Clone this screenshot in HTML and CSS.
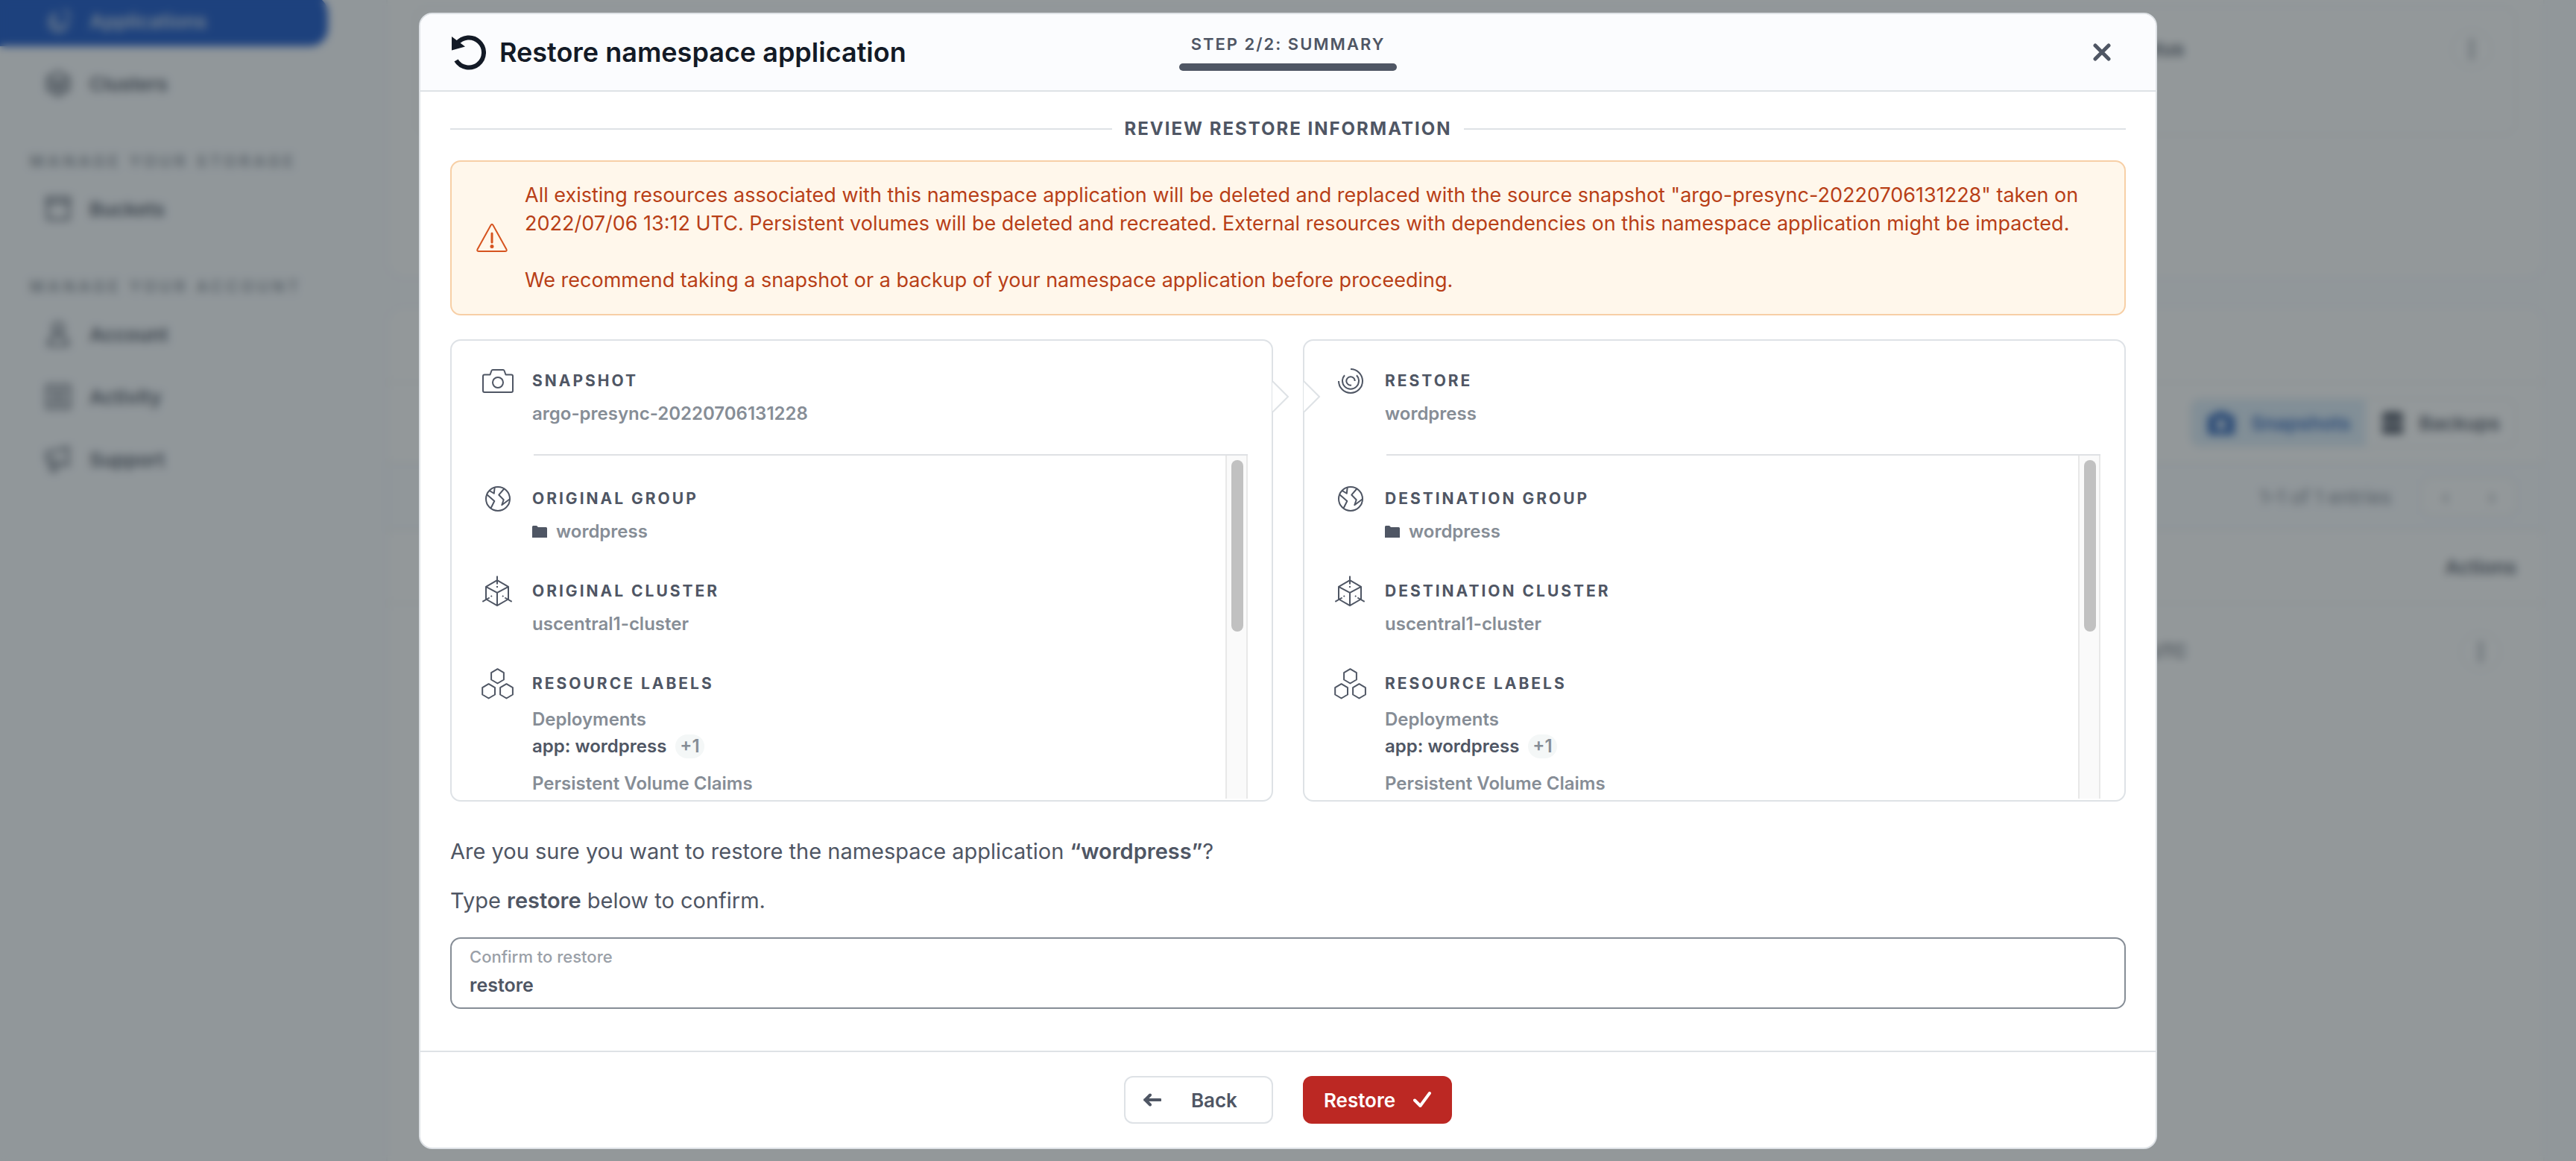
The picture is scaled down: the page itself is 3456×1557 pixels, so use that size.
FILE: index.html
```html
<!DOCTYPE html>
<html lang="en">
<head>
<meta charset="utf-8">
<title>Restore namespace application</title>
<link rel="stylesheet" href="styles.css">
</head>
<body>
<svg class="sprite" aria-hidden="true">
  <symbol id="i-camera" viewBox="0 0 44 44"><path d="M4 13.500h7.500l2-5.500q.400-1 1.500-1h14q1.100 0 1.500 1l2 5.500H40q2 0 2 2V35q0 2-2 2H4q-2 0-2-2V15.500q0-2 2-2z"/><circle cx="22" cy="24" r="7"/></symbol>
  <symbol id="i-globe" viewBox="0 0 44 44"><circle cx="22" cy="22" r="16"/><path d="M10.500 11l6.300 3.700.900-8.300M6.700 15.700l10.600 9.300-5 10M30.700 8l-7.400 8.700 6.400 6.600-2.400 7 10.700-8"/></symbol>
  <symbol id="i-cube" viewBox="0 0 44 44"><path d="M21 7.200l15 8.600v16.700l-15 8.700-15-8.700V15.800zM6 15.800l15 8 15-8M21 23.800v17.400M21 1.500v11M21 15v2M1.300 35.800l9.400-5.300M40.700 35.800l-9.400-5.300M12.500 29l1.600-.900M29.500 29l-1.600-.900"/></symbol>
  <symbol id="i-hex" viewBox="0 0 44 44"><path d="M21.500 2.200l8.400 5v9.300l-8.400 5-8.400-5V7.200zM9.600 22.200l8.400 5v9.300l-8.400 5-8.400-5v-9.300zM33.500 22.200l8.400 5v9.300l-8.400 5-8.400-5v-9.300z"/></symbol>
  <symbol id="i-spiral" viewBox="0 0 44 44"><path d="M22 6A16 16 0 1 1 6 22M30 14.200A11 11 0 1 1 14 14.200M23 27.600A5.700 5.700 0 1 1 27.700 22"/></symbol>
  <symbol id="i-folder" viewBox="0 0 20 16"><path d="M0 1.500Q0 0 1.500 0H6l2 2h10.500Q20 2 20 3.500V16H0z"/></symbol>
  <symbol id="i-dots" viewBox="0 0 36 36"><circle cx="18" cy="8" r="3"/><circle cx="18" cy="18" r="3"/><circle cx="18" cy="28" r="3"/></symbol>
  <symbol id="i-notch" viewBox="0 0 24 42"><path d="M1 0L22 21 1 42"/></symbol>
</svg>

<div class="app">
  <nav class="sidebar">
    <a class="nav-item active" href="#"><svg viewBox="0 0 36 36"><path d="M16 8A12 12 0 1 0 30 16M17 14a6 6 0 1 0 7 7M26 3a14 14 0 0 1 7 11"/></svg>Applications</a>
    <a class="nav-item" href="#"><svg viewBox="0 0 36 36"><path d="M18 2l14 8v16l-14 8-14-8V10zM4 10l14 8 14-8M18 18v16M4 26l14-8 14 8"/></svg>Clusters</a>
    <h2 class="nav-heading">MANAGE YOUR STORAGE</h2>
    <a class="nav-item" href="#"><svg viewBox="0 0 36 36"><path d="M3 3h30v7H3zM4 10v22h28V10"/></svg>Buckets</a>
    <h2 class="nav-heading">MANAGE YOUR ACCOUNT</h2>
    <a class="nav-item" href="#"><svg viewBox="0 0 36 36"><circle cx="18" cy="10" r="7"/><path d="M5 33q1-14 13-14t13 14z"/></svg>Account</a>
    <a class="nav-item" href="#"><svg viewBox="0 0 36 36"><path d="M3 3h30v30H3zM9 11h18M9 18h18M9 25h18"/></svg>Activity</a>
    <a class="nav-item" href="#"><svg viewBox="0 0 36 36"><path d="M3 8h8l20-6v24l-20-6H3zM8 20v13h8V21"/></svg>Support</a>
  </nav>
  <div class="main">
    <section class="panel overview">
      <div class="summary-card"><span class="status">Status</span><button class="round" aria-label="More"><svg><use href="#i-dots"/></svg></button></div>
    </section>
    <section class="panel listing">
      <div class="band title-band"></div>
      <div class="band tools">
        <div class="segment">
          <button class="seg on"><svg class="wide" viewBox="0 0 40 32"><path fill-rule="evenodd" d="M2 6h8l3-5h14l3 5h8v26H2zM20 11a7 7 0 1 0 0 14 7 7 0 0 0 0-14z"/></svg>Snapshots</button>
          <button class="seg"><svg viewBox="0 0 32 32"><path d="M2 4l5-3h18l5 3v11H2zM2 18h28v13H2z"/></svg>Backups</button>
        </div>
      </div>
      <div class="band pages"><span>1–1 of 1 entries</span>
        <div class="pager"><button aria-label="Previous">‹</button><button aria-label="Next">›</button></div>
      </div>
      <div class="band columns">Actions</div>
      <div class="row"><span class="created">UTC</span><button class="round" aria-label="More"><svg><use href="#i-dots"/></svg></button></div>
    </section>
  </div>
</div>

<div class="overlay">
  <div class="modal" role="dialog" aria-modal="true" aria-labelledby="modal-title">
    <header class="modal-head">
      <div class="modal-name">
        <svg class="restore-icon" viewBox="0 0 48 48"><path class="ring" d="M9 12.500A20 20 0 1 1 8 35"/><path d="M2 3l18 13.500-18 5z"/></svg>
        <h1 id="modal-title">Restore namespace application</h1>
      </div>
      <div class="step"><span>STEP 2/2: SUMMARY</span><i></i></div>
      <button class="close" aria-label="Close"><svg viewBox="0 0 24 24"><path d="M3 3l18 18M21 3L3 21"/></svg></button>
    </header>

    <div class="modal-body">
      <h2 class="rule-heading">REVIEW RESTORE INFORMATION</h2>

      <div class="alert" role="alert">
        <svg viewBox="0 0 44 40"><path d="M20.500 3q1.500-2.500 3 0l18 32.500q1 2.500-2 2.500h-35q-3 0-2-2.500z"/><path class="mark" d="M22 14v12"/><circle cx="22" cy="31.500" r="1.500"/></svg>
        <div>
          <p>All existing resources associated with this namespace application will be deleted and replaced with the source snapshot "argo-presync-20220706131228" taken on 2022/07/06 13:12 UTC. Persistent volumes will be deleted and recreated. External resources with dependencies on this namespace application might be impacted.</p>
          <p>We recommend taking a snapshot or a backup of your namespace application before proceeding.</p>
        </div>
      </div>

      <div class="cards">
        <section class="card from">
          <svg class="notch"><use href="#i-notch"/></svg>
          <div class="item"><svg class="icon"><use href="#i-camera"/></svg><div><h3>SNAPSHOT</h3><p>argo-presync-20220706131228</p></div></div>
          <hr>
          <div class="scroll">
            <div class="items">
              <div class="item"><svg class="icon"><use href="#i-globe"/></svg><div><h3>ORIGINAL GROUP</h3><p class="folder"><svg><use href="#i-folder"/></svg>wordpress</p></div></div>
              <div class="item"><svg class="icon"><use href="#i-cube"/></svg><div><h3>ORIGINAL CLUSTER</h3><p>uscentral1-cluster</p></div></div>
              <div class="item"><svg class="icon"><use href="#i-hex"/></svg><div><h3>RESOURCE LABELS</h3>
                <dl><dt>Deployments</dt><dd>app: wordpress <span class="pill">+1</span></dd><dt>Persistent Volume Claims</dt></dl></div></div>
            </div>
            <div class="track"><div class="thumb"></div></div>
          </div>
        </section>

        <section class="card to">
          <svg class="notch"><use href="#i-notch"/></svg>
          <div class="item"><svg class="icon"><use href="#i-spiral"/></svg><div><h3>RESTORE</h3><p>wordpress</p></div></div>
          <hr>
          <div class="scroll">
            <div class="items">
              <div class="item"><svg class="icon"><use href="#i-globe"/></svg><div><h3>DESTINATION GROUP</h3><p class="folder"><svg><use href="#i-folder"/></svg>wordpress</p></div></div>
              <div class="item"><svg class="icon"><use href="#i-cube"/></svg><div><h3>DESTINATION CLUSTER</h3><p>uscentral1-cluster</p></div></div>
              <div class="item"><svg class="icon"><use href="#i-hex"/></svg><div><h3>RESOURCE LABELS</h3>
                <dl><dt>Deployments</dt><dd>app: wordpress <span class="pill">+1</span></dd><dt>Persistent Volume Claims</dt></dl></div></div>
            </div>
            <div class="track"><div class="thumb"></div></div>
          </div>
        </section>
      </div>

      <div class="ask">
        <p>Are you sure you want to restore the namespace application <b>“wordpress”</b>?</p>
        <p>Type <b>restore</b> below to confirm.</p>
      </div>
      <div class="field">
        <label for="confirm">Confirm to restore</label>
        <input id="confirm" type="text" value="restore">
      </div>
    </div>

    <footer class="modal-foot">
      <button class="btn back"><svg viewBox="0 0 24 24"><path d="M22.500 12H2M9 5.500L2.500 12 9 18.500"/></svg>Back</button>
      <button class="btn go">Restore<svg viewBox="0 0 24 24"><path d="M2 12.500l7.500 7.500L22 3"/></svg></button>
    </footer>
  </div>
</div>
</body>
</html>
```
FILE: styles.css
```css
* { box-sizing: border-box; }

body {
  margin: 0;
  font-family: Inter, "Liberation Sans", sans-serif;
  color: #4f5664;
  background: #fafcff;
}

h1, h2, h3, p, dl, dd { margin: 0; }
button, input { font: inherit; color: inherit; }
button { cursor: pointer; }
svg { flex: none; }
.sprite { position: absolute; width: 0; height: 0; }

/* Page behind the dialog */
.app { display: flex; height: 100vh; overflow: hidden; }
.sidebar { width: 440px; margin-top: -6px; flex: none; }
.nav-item {
  display: flex; align-items: center; gap: 24px;
  height: 68px; margin-bottom: 16px; padding-left: 60px;
  border-radius: 0 24px 24px 0;
  font-size: 26px; font-weight: 600; color: #4f5664; text-decoration: none;
}
.nav-item svg { width: 36px; height: 36px; fill: none; stroke: currentColor; stroke-width: 3; }
.nav-item.active { background: #1351c5; color: #c5d5ea; }
.nav-heading {
  margin: 56px 0 14px; padding-left: 40px;
  font-size: 21px; line-height: 30px; font-weight: 600; letter-spacing: 5px; color: #868d96;
}
.main { flex: 1; padding: 0 42px 0 78px; }
.panel { background: #fff; border: 2px solid #f0f2f5; }
.overview { height: 374px; padding: 8px 36px; border-top: 0; border-radius: 0 0 24px 24px; }
.summary-card {
  display: flex; justify-content: space-between; height: 174px; padding: 28px 30px;
  border: 2px solid #eceff2; border-radius: 16px; font-size: 26px; font-weight: 600;
}
.status, .created { width: 85%; text-align: right; line-height: 56px; }
.listing { height: 1300px; margin-top: 36px; border-radius: 24px 24px 0 0; }
.band { display: flex; align-items: center; justify-content: flex-end; padding-right: 36px; border-bottom: 2px solid #eceff2; }
.title-band { height: 102px; }
.tools { height: 108px; }
.segment { display: flex; border: 2px solid #eceff2; border-radius: 12px; }
.seg {
  display: flex; align-items: center; gap: 20px; height: 62px; padding: 0 20px;
  border: 0; background: none; font-size: 26px; font-weight: 600;
}
.seg svg { width: 32px; height: 32px; fill: currentColor; }
.seg .wide { width: 40px; }
.seg.on { background: #dcecf8; color: #2c62b8; border-radius: 12px 0 0 12px; }
.pages { height: 90px; gap: 40px; background: #fafcff; font-size: 26px; color: #7c8490; }
.pager { display: flex; border: 2px solid #eceff2; border-radius: 12px; background: #fff; }
.pager button { width: 62px; height: 48px; border: 0; background: none; }
.columns { height: 98px; font-size: 26px; font-weight: 600; }
.row { display: flex; justify-content: space-between; padding: 36px 56px 36px 20px; font-size: 24px; font-weight: 500; }
.round { width: 56px; height: 56px; padding: 8px; border: 2px solid #eceff2; border-radius: 50%; background: #fff; }
.round svg { width: 36px; height: 36px; fill: #6c7480; }

/* Dialog */
.overlay {
  position: fixed; inset: 0;
  display: flex; flex-direction: column; align-items: center; padding-top: 17px;
  background: rgba(39, 49, 53, .5);
  backdrop-filter: blur(6px);
}
.modal {
  width: 67.5%; max-width: 2332px;
  overflow: hidden;
  background: #fff; border: 2px solid #dee2e6; border-radius: 18px;
}
.modal-head {
  display: grid; grid-template-columns: 1fr auto 1fr; align-items: center;
  height: 104px; padding: 0 40px;
  background: #fbfcfe; border-bottom: 2px solid #dee2e6;
}
.modal-name { display: flex; align-items: center; gap: 18px; }
.restore-icon { width: 48px; height: 48px; fill: #131a26; }
.restore-icon .ring { fill: none; stroke: #131a26; stroke-width: 6; }
h1 { font-size: 36px; line-height: 44px; font-weight: 600; color: #131a26; }
.step { display: flex; flex-direction: column; align-items: center; gap: 12px; }
.step span { padding: 0 12px; font-size: 22px; line-height: 28px; font-weight: 600; letter-spacing: 2px; }
.step i { width: 292px; height: 10px; border-radius: 5px; background: #4f5664; }
.close { justify-self: end; display: flex; padding: 20px; border: 0; background: none; }
.close svg { width: 24px; height: 24px; fill: none; stroke: #4f5664; stroke-width: 5; stroke-linecap: round; }

.modal-body { padding: 36px 40px 56px; }
.rule-heading {
  display: flex; align-items: center; gap: 16px; margin-bottom: 28px;
  font-size: 24px; line-height: 28px; font-weight: 700; letter-spacing: 2px;
}
.rule-heading::before, .rule-heading::after { content: ""; flex: 1; height: 2px; background: #dee2e6; }

.alert {
  display: flex; align-items: center; gap: 22px; padding: 26px 32px;
  border: 2px solid #f7cfa6; border-radius: 14px;
  background: #fff7eb; color: #b83f17; font-size: 27px; line-height: 38px;
}
.alert svg { width: 44px; height: 40px; fill: none; stroke: #d65420; stroke-width: 2; stroke-linecap: round; }
.alert .mark { stroke-width: 3; }
.alert circle { fill: #d65420; }
.alert p + p { margin-top: 38px; }

.cards { display: grid; grid-template-columns: 1fr 1fr; gap: 40px; margin-top: 32px; }
.card { position: relative; padding: 40px 32px 2px 40px; border: 2px solid #dee2e6; border-radius: 14px; }
.notch { position: absolute; top: 54px; width: 24px; height: 42px; fill: #fff; stroke: #dee2e6; stroke-width: 2; }
.from .notch { right: -24px; }
.to .notch { left: -2px; }
.item { display: flex; gap: 24px; }
.icon { width: 44px; height: 44px; margin: -8px 0; fill: none; stroke: #4f5664; stroke-width: 2; stroke-linejoin: round; }
.item h3 { font-size: 21px; line-height: 28px; font-weight: 700; letter-spacing: 3px; }
.item p, dl { margin-top: 14px; font-size: 24px; line-height: 32px; font-weight: 600; color: #868d96; }
.card hr { height: 2px; margin: 38px 0 0 70px; border: 0; background: #dfe1e4; }
.scroll { display: flex; height: 460px; overflow: hidden; }
.items { flex: 1; display: flex; flex-direction: column; gap: 50px; padding-top: 44px; }
.item .folder { display: flex; align-items: center; gap: 12px; }
.folder svg { width: 20px; height: 16px; fill: #4f5664; }
dl { padding-top: 4px; }
dd { display: flex; align-items: center; gap: 12px; margin: 4px 0 18px; color: #4f5664; }
.pill { padding: 0 6px; border-radius: 16px; background: #f4f7f7; color: #868d96; }
.track { width: 30px; padding: 6px; border: solid #e8e8e8; border-width: 0 2px; background: #fafafa; }
.thumb { width: 16px; height: 230px; border-radius: 8px; background: #c1c1c1; }

.ask { display: grid; gap: 28px; margin: 48px 0 30px; font-size: 29px; line-height: 38px; }
.ask b { font-weight: 600; }
.field { display: grid; gap: 8px; padding: 12px 24px; border: 2px solid #868d96; border-radius: 14px; }
.field label { font-size: 22px; line-height: 24px; font-weight: 500; color: #9aa0a8; }
.field input { padding: 0; border: 0; outline: 0; background: none; height: 36px; font-size: 25px; line-height: 36px; font-weight: 600; }

.modal-foot { display: flex; justify-content: center; gap: 40px; padding: 32px; border-top: 2px solid #dee2e6; }
.btn { display: flex; align-items: center; height: 64px; border-radius: 12px; font-size: 26px; font-weight: 600; }
.btn svg { width: 24px; height: 24px; fill: none; stroke: currentColor; stroke-width: 4; stroke-linecap: round; stroke-linejoin: round; }
.back { width: 200px; gap: 40px; padding: 0 24px; border: 2px solid #dee2e6; background: #fff; }
.go { gap: 24px; padding: 0 28px; border: 0; background: #bc2823; color: #fff; }
```
